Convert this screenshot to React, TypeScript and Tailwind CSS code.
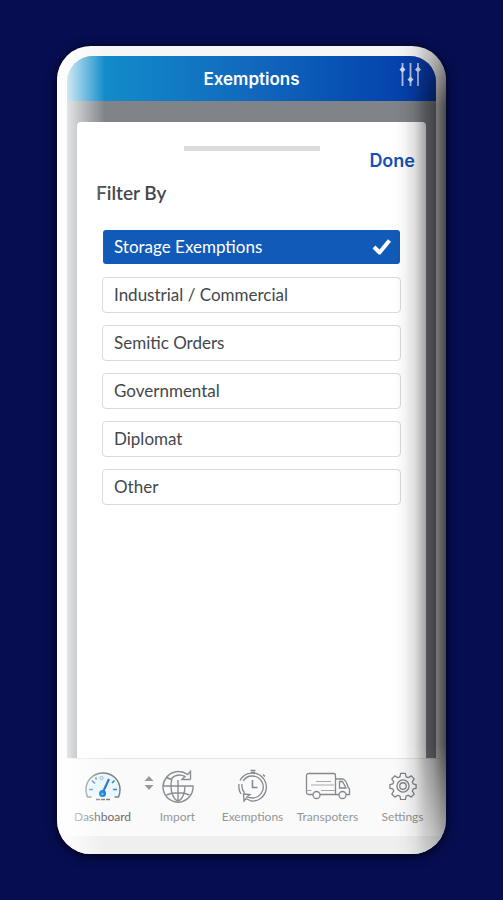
import { useState, type ReactNode } from "react";
import clsx from "clsx";

const FILTERS = [
  "Storage Exemptions",
  "Industrial / Commercial",
  "Semitic Orders",
  "Governmental",
  "Diplomat",
  "Other",
];

function SlidersIcon() {
  return (
    <svg width="22" height="26" viewBox="0 0 22 26" fill="none" stroke="#b4c4ea" strokeWidth="1.8">
      <path d="M3.5 1v23M11.5 1v23M19 1v23" />
      <g fill="#d3def8" stroke="none">
        <path d="M3.5 4.500l3 3-3 3-3-3zM11.500 14.500l3 3-3 3-3-3zM19 4.500l3 3-3 3-3-3z" />
      </g>
    </svg>
  );
}

function CheckIcon() {
  return (
    <svg width="20" height="18" viewBox="0 0 20 18" fill="none" stroke="#fff" strokeWidth="4">
      <path d="M2 9l5.500 5.500L17.500 2.500" strokeLinejoin="round" />
    </svg>
  );
}

function GaugeIcon() {
  return (
    <svg width="36" height="30" viewBox="0 0 36 30" fill="none">
      <path d="M1 18.500a17 16.500 0 0 1 34 0v7.500H1z" fill="#e8f8fe" />
      <path d="M6.500 26H2.500Q1 23 1 18.500a17 16.500 0 0 1 34 0Q35 23 33.500 26h-4" stroke="#7c8286" strokeWidth="1.500" />
      <path d="M11 28.500h14" stroke="#7c8286" strokeWidth="1.500" strokeDasharray="4 1" />
      <path
        d="M4 18.500h4M7 9.500l3 3M28 18.500h4M29.500 9.500l-2.500 2.500M10.500 6.500l1 2"
        stroke="#4a80c4"
        strokeWidth="1.600"
      />
      <circle cx="16.500" cy="7" r="1.600" stroke="#9db2ba" />
      <path d="M18 21l6-13" stroke="#3a76c2" strokeWidth="2.200" />
      <circle cx="17.500" cy="22.500" r="3.500" fill="#1d82d0" />
      <circle cx="17.500" cy="23" r="1.200" fill="#64c4ee" />
    </svg>
  );
}

function GlobeIcon() {
  return (
    <svg width="32" height="34" viewBox="0 0 32 34" fill="none" stroke="#8b8f93" strokeWidth="1.400">
      <path d="M28.500 10.500v-8l-3 3C19 .500 9 2 4.500 8.500A15 15 0 1 0 31 17H1" />
      <path d="M28.500 10.500h-8.500l3-3c-5-2.500-10-1.500-13.500 2" />
      <path d="M4.500 8.500c2 1 3.500 1.500 5.500 2M10 9.500C8.500 14 8.500 22 11 27c1.500 3 3 4.500 5 5 2-.500 3.500-2 5-5 1.500-3 2-6.500 2-10" />
      <path d="M16 11v21M4.500 26c6-3 17-3 23 0" />
    </svg>
  );
}

function ClockIcon() {
  return (
    <svg width="32" height="34" viewBox="0 0 32 34" fill="none" stroke="#85898d" strokeWidth="1.300">
      <path d="M13.500 1.500h5M14 3.500h4M26 5.500l2 2" />
      <path d="M4 25A14.500 14.500 0 0 1 2 15M3 11.500A14 14 0 1 1 14 32" />
      <path d="M7.500 24A11.500 11.500 0 0 1 5 15M6 12A11 11 0 1 1 15 29" />
      <path d="M15 29l-5-1 3-2.500-6.500-.500.500 7 2-2.500 5 2.500" />
      <path d="M15.500 11v7.500h5" strokeWidth="1.600" />
    </svg>
  );
}

function TruckIcon() {
  return (
    <svg width="46" height="30" viewBox="0 0 46 30" fill="none" stroke="#85898d" strokeWidth="1.300">
      <path d="M8 23.500H3.500a2 2 0 0 1-2-2v-17a2 2 0 0 1 2-2h25a2 2 0 0 1 2 2v19H15" />
      <path d="M30.500 8h7.500c2.500 1 4 4 5 8l1.500 2v5.500h-3.500M34 23.500h-3.500M34.500 10.500h3l3.500 6.500h-6.500z" />
      <path d="M11 10.500h15M6 14h23M1.500 19.500h5M16 19.500h14" strokeWidth="1.100" stroke="#a4a8ab" />
      <circle cx="11.500" cy="24" r="3.500" />
      <circle cx="37.500" cy="24" r="3.500" />
    </svg>
  );
}

function GearIcon() {
  return (
    <svg width="28" height="28" viewBox="0 0 30 30" fill="none" stroke="#7f8386" strokeWidth="1.400" strokeLinejoin="round">
      <path d="M12.500 1.500h5l.8 3.700 2.200.9 3.200-2 3.300 3.300-2 3.200.9 2.200 3.100.7v4l-3.100.7-.9 2.200 2 3.200-3.300 3.300-3.200-2-2.200.9-.8 3.700h-5l-.8-3.700-2.200-.9-3.200 2L3 23.600l2-3.200-.9-2.200-3.100-.7v-4l3.100-.7.9-2.200-2-3.200 3.300-3.300 3.200 2 2.200-.9z" />
      <circle cx="15" cy="15" r="6.500" />
      <circle cx="15" cy="15" r="3.500" />
    </svg>
  );
}

function SortArrows() {
  return (
    <svg width="10" height="16" viewBox="0 0 10 16" fill="#9a9a9a" className="absolute left-1 top-3">
      <path d="M5 1l4.500 5h-9zM5 15l4.500-5h-9z" />
    </svg>
  );
}

function NavItem({
  label,
  icon,
  active,
  sortable,
}: {
  label: string;
  icon: ReactNode;
  active?: boolean;
  sortable?: boolean;
}) {
  return (
    <a
      href={"#" + label.toLowerCase()}
      aria-current={active ? "page" : undefined}
      className={clsx(
        "relative flex min-w-0 flex-1 flex-col items-center text-xs leading-4",
        active ? "text-[#6c6c6c]" : "text-[#969696]",
      )}
    >
      {sortable && <SortArrows />}
      <span className="flex h-[46px] items-center">{icon}</span>
      <span className="whitespace-nowrap">{label}</span>
    </a>
  );
}

export default function App() {
  const [selected, setSelected] = useState(FILTERS[0]);

  return (
    <div className="flex min-h-screen bg-[#060e51] px-[57px] py-[46px] font-['Lato','Carlito',sans-serif]">
      <div className="relative flex w-full flex-col overflow-hidden rounded-[34px] bg-[#f6f6f6] px-[10px] pt-[10px] shadow-[0_2px_10px_2px_rgba(0,0,20,0.7)]">
        <div className="flex flex-1 flex-col overflow-hidden rounded-t-[26px] bg-[#808488]">
          <header className="grid h-[45px] grid-cols-[1fr_auto_1fr] items-center bg-linear-to-r from-[#1594cd] via-[#1268bd] to-[#0738a8] px-[15px] text-white">
            <h1 className="col-start-2 pt-[2px] font-['Inter',sans-serif] text-[17px] font-semibold">
              Exemptions
            </h1>
            <button type="button" aria-label="Filters" className="justify-self-end pb-2">
              <SlidersIcon />
            </button>
          </header>

          <section className="mx-[10px] mt-[21px] flex flex-1 flex-col rounded-t bg-white px-[11px] pt-6">
            <div className="mx-auto h-[5px] w-[136px] bg-[#dcdcdc]" />
            <button
              type="button"
              className="self-end font-['Inter',sans-serif] text-lg leading-5 font-semibold text-[#1450b4]"
            >
              Done
            </button>
            <fieldset className="px-[14px]">
              <legend className="-ml-[6px] pt-[10px] pb-6 text-[19px] leading-6 font-semibold text-[#43474b]">
                Filter By
              </legend>
              <div className="flex flex-col gap-3">
                {FILTERS.map((name) => (
                  <label
                    key={name}
                    className={clsx(
                      "relative flex h-9 cursor-pointer items-center justify-between rounded-sm border px-[11px] text-[17px]",
                      name === selected
                        ? "border-transparent bg-[#125ab7] bg-clip-padding pr-2 text-white"
                        : "border-[#d9dcde] bg-white text-[#43474b]",
                    )}
                  >
                    <input
                      type="radio"
                      name="filter"
                      value={name}
                      checked={name === selected}
                      onChange={() => setSelected(name)}
                      className="sr-only"
                    />
                    {name}
                    {name === selected && <CheckIcon />}
                  </label>
                ))}
              </div>
            </fieldset>
          </section>
        </div>

        <nav className="-mr-1 -ml-[2px] flex h-[78px] border-t border-[#e6e6e6] bg-[#fafafa] pt-1">
          <NavItem label="Dashboard" icon={<GaugeIcon />} active />
          <NavItem label="Import" icon={<GlobeIcon />} sortable />
          <NavItem label="Exemptions" icon={<ClockIcon />} />
          <NavItem label="Transpoters" icon={<TruckIcon />} />
          <NavItem label="Settings" icon={<GearIcon />} />
        </nav>
        <div className="-mx-[10px] h-[18px] bg-[#efefef]" />

        {/* light on the left edge, shade on the right edge */}
        <div className="pointer-events-none absolute inset-y-0 left-0 w-[48px] bg-linear-to-r from-white/80 from-20% via-white/50 via-50% to-white/0" />
        <div className="pointer-events-none absolute inset-y-0 right-0 w-[52px] bg-[linear-gradient(to_right,transparent,rgba(0,0,0,0.04)_20%,rgba(0,0,0,0.13)_40%,rgba(0,0,0,0.34)_60%,rgba(0,0,0,0.45)_75%,rgba(0,0,0,0.6)_90%,rgba(0,0,0,0.7))] [mask-image:linear-gradient(to_bottom,rgba(0,0,0,0.5),black_60px,black_calc(100%-110px),rgba(0,0,0,0.4))]" />
      </div>
    </div>
  );
}
